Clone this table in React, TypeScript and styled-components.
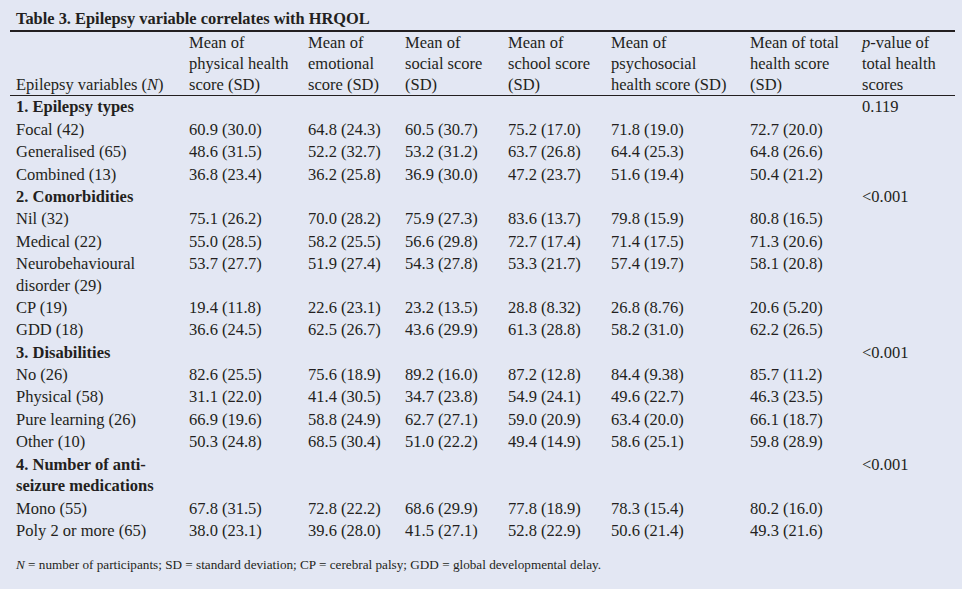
import styled, { createGlobalStyle } from "styled-components";

const GlobalStyle = createGlobalStyle`
  html, body {
    margin: 0;
    background: #e3e7f3;
  }
  body {
    font-family: "Liberation Serif", "Times New Roman", serif;
    color: #231f20;
  }
`;

type Row = { label: string[]; values: string[] };
type Group = { title: string[]; p: string; rows: Row[] };

const columns = [179, 119, 97, 103, 103, 139, 112, 93];

const headers: string[][] = [
  ["Mean of", "physical health", "score (SD)"],
  ["Mean of", "emotional", "score (SD)"],
  ["Mean of", "social score", "(SD)"],
  ["Mean of", "school score", "(SD)"],
  ["Mean of", "psychosocial", "health score (SD)"],
  ["Mean of total", "health score", "(SD)"],
];

const groups: Group[] = [
  {
    title: ["1. Epilepsy types"],
    p: "0.119",
    rows: [
      { label: ["Focal (42)"], values: ["60.9 (30.0)", "64.8 (24.3)", "60.5 (30.7)", "75.2 (17.0)", "71.8 (19.0)", "72.7 (20.0)"] },
      { label: ["Generalised (65)"], values: ["48.6 (31.5)", "52.2 (32.7)", "53.2 (31.2)", "63.7 (26.8)", "64.4 (25.3)", "64.8 (26.6)"] },
      { label: ["Combined (13)"], values: ["36.8 (23.4)", "36.2 (25.8)", "36.9 (30.0)", "47.2 (23.7)", "51.6 (19.4)", "50.4 (21.2)"] },
    ],
  },
  {
    title: ["2. Comorbidities"],
    p: "<0.001",
    rows: [
      { label: ["Nil (32)"], values: ["75.1 (26.2)", "70.0 (28.2)", "75.9 (27.3)", "83.6 (13.7)", "79.8 (15.9)", "80.8 (16.5)"] },
      { label: ["Medical (22)"], values: ["55.0 (28.5)", "58.2 (25.5)", "56.6 (29.8)", "72.7 (17.4)", "71.4 (17.5)", "71.3 (20.6)"] },
      { label: ["Neurobehavioural", "disorder (29)"], values: ["53.7 (27.7)", "51.9 (27.4)", "54.3 (27.8)", "53.3 (21.7)", "57.4 (19.7)", "58.1 (20.8)"] },
      { label: ["CP (19)"], values: ["19.4 (11.8)", "22.6 (23.1)", "23.2 (13.5)", "28.8 (8.32)", "26.8 (8.76)", "20.6 (5.20)"] },
      { label: ["GDD (18)"], values: ["36.6 (24.5)", "62.5 (26.7)", "43.6 (29.9)", "61.3 (28.8)", "58.2 (31.0)", "62.2 (26.5)"] },
    ],
  },
  {
    title: ["3. Disabilities"],
    p: "<0.001",
    rows: [
      { label: ["No (26)"], values: ["82.6 (25.5)", "75.6 (18.9)", "89.2 (16.0)", "87.2 (12.8)", "84.4 (9.38)", "85.7 (11.2)"] },
      { label: ["Physical (58)"], values: ["31.1 (22.0)", "41.4 (30.5)", "34.7 (23.8)", "54.9 (24.1)", "49.6 (22.7)", "46.3 (23.5)"] },
      { label: ["Pure learning (26)"], values: ["66.9 (19.6)", "58.8 (24.9)", "62.7 (27.1)", "59.0 (20.9)", "63.4 (20.0)", "66.1 (18.7)"] },
      { label: ["Other (10)"], values: ["50.3 (24.8)", "68.5 (30.4)", "51.0 (22.2)", "49.4 (14.9)", "58.6 (25.1)", "59.8 (28.9)"] },
    ],
  },
  {
    title: ["4. Number of anti-", "seizure medications"],
    p: "<0.001",
    rows: [
      { label: ["Mono (55)"], values: ["67.8 (31.5)", "72.8 (22.2)", "68.6 (29.9)", "77.8 (18.9)", "78.3 (15.4)", "80.2 (16.0)"] },
      { label: ["Poly 2 or more (65)"], values: ["38.0 (23.1)", "39.6 (28.0)", "41.5 (27.1)", "52.8 (22.9)", "50.6 (21.4)", "49.3 (21.6)"] },
    ],
  },
];

function Lines({ lines }: { lines: string[] }) {
  return (
    <>
      {lines.map((l, i) => (
        <span key={i}>
          {i > 0 && <br />}
          {l}
        </span>
      ))}
    </>
  );
}

function App() {
  return (
    <Page>
      <GlobalStyle />
      <Title>Table 3. Epilepsy variable correlates with HRQOL</Title>
      <Table>
        <colgroup>
          {columns.map((w, i) => (
            <col key={i} style={{ width: w }} />
          ))}
        </colgroup>
        <thead>
          <tr>
            <HeadCell>
              Epilepsy variables (<i>N</i>)
            </HeadCell>
            {headers.map((h, i) => (
              <HeadCell key={i}>
                <Lines lines={h} />
              </HeadCell>
            ))}
            <HeadCell>
              <i>p</i>-value of
              <br />
              total health
              <br />
              scores
            </HeadCell>
          </tr>
        </thead>
        <tbody>
          {groups.map((g) => (
            <GroupRows key={g.title[0]} group={g} />
          ))}
        </tbody>
      </Table>
      <Footnote>
        <i>N</i> = number of participants; SD = standard deviation; CP = cerebral palsy; GDD = global developmental delay.
      </Footnote>
    </Page>
  );
}

function GroupRows({ group }: { group: Group }) {
  return (
    <>
      <tr>
        <Cell $bold colSpan={7}>
          <Lines lines={group.title} />
        </Cell>
        <Cell>{group.p}</Cell>
      </tr>
      {group.rows.map((r) => (
        <tr key={r.label[0]}>
          <Cell>
            <Lines lines={r.label} />
          </Cell>
          {r.values.map((v, i) => (
            <Cell key={i}>{v}</Cell>
          ))}
          <Cell />
        </tr>
      ))}
    </>
  );
}

export default App;

const Page = styled.div`
  padding: 9px 0 0 10px;
  width: 945px;
`;

const Title = styled.h2`
  margin: 0;
  padding: 0 0 1px 6px;
  font-size: 16.4px;
  font-weight: 700;
  line-height: 20px;
`;

const Table = styled.table`
  width: 945px;
  table-layout: fixed;
  border-collapse: collapse;
  border-top: 2px solid #231f20;
  font-size: 16.5px;

  & td:first-child,
  & th:first-child {
    padding-left: 6px;
  }
`;

const HeadCell = styled.th`
  text-align: left;
  vertical-align: bottom;
  font-weight: 400;
  white-space: nowrap;
  line-height: 21px;
  padding: 0;
  border-bottom: 1px solid #231f20;
`;

const Cell = styled.td<{ $bold?: boolean }>`
  text-align: left;
  vertical-align: top;
  white-space: nowrap;
  line-height: 21.6px;
  padding: 0.4px 0;
  font-weight: ${({ $bold }) => ($bold ? 700 : 400)};
`;

const Footnote = styled.p`
  margin: 15px 0 0;
  padding-left: 6px;
  font-size: 13.2px;
  line-height: 16px;
`;
